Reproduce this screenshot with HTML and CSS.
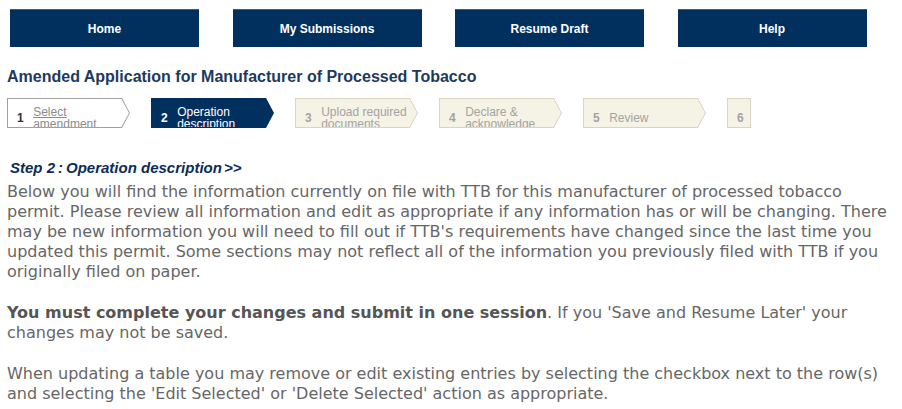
FILE: index.html
```html
<!DOCTYPE html>
<html lang="en">
<head>
<meta charset="utf-8">
<title>Amended Application for Manufacturer of Processed Tobacco</title>
<link rel="stylesheet" href="styles.css">
</head>
<body>
<nav class="topnav">
  <a class="navbtn" href="#">Home</a>
  <a class="navbtn" href="#">My Submissions</a>
  <a class="navbtn" href="#">Resume Draft</a>
  <a class="navbtn" href="#">Help</a>
</nav>

<h1 class="page-title">Amended Application for Manufacturer of Processed Tobacco</h1>

<ol class="steps">
  <li class="step done"><div class="step-in"><span class="num">1</span><a class="label link" href="#">Select<br>amendment</a></div></li>
  <li class="step current"><div class="step-in"><span class="num">2</span><span class="label">Operation<br>description</span></div></li>
  <li class="step todo"><div class="step-in"><span class="num">3</span><span class="label">Upload required<br>documents</span></div></li>
  <li class="step todo"><div class="step-in"><span class="num">4</span><span class="label">Declare &amp;<br>acknowledge</span></div></li>
  <li class="step todo"><div class="step-in"><span class="num">5</span><span class="label">Review</span></div></li>
  <li class="step todo last"><div class="step-in"><span class="num">6</span></div></li>
</ol>

<h2 class="step-heading">Step 2<span class="sep">:</span>Operation description<span class="gt">&gt;&gt;</span></h2>

<div class="content">
<p class="info">Below you will find the information currently on file with TTB for this manufacturer of processed tobacco permit. Please review all information and edit as appropriate if any information has or will be changing. There may be new information you will need to fill out if TTB's requirements have changed since the last time you updated this permit. Some sections may not reflect all of the information you previously filed with TTB if you originally filed on paper.</p>

<p class="info"><strong>You must complete your changes and submit in one session</strong>. If you 'Save and Resume Later' your changes may not be saved.</p>

<p class="info">When updating a table you may remove or edit existing entries by selecting the checkbox next to the row(s) and selecting the 'Edit Selected' or 'Delete Selected' action as appropriate.</p>
</div>
</body>
</html>
```

FILE: styles.css
```css
html, body {
  margin: 0;
  background: #ffffff;
}

body {
  padding: 9px 7px 0 7px;
  font-family: "Liberation Sans", Arial, sans-serif;
}

.topnav {
  display: flex;
  gap: 33.5px;
  margin-left: 3px;
}

.navbtn {
  width: 189px;
  height: 38px;
  box-sizing: border-box;
  background: #01305f;
  border-top: 1px solid #3b5d85;
  color: #ffffff;
  font-weight: bold;
  font-size: 12px;
  text-decoration: none;
  display: flex;
  align-items: center;
  justify-content: center;
}

.page-title {
  margin: 21px 0 0 0;
  font-size: 16px;
  line-height: 18px;
  font-weight: bold;
  color: #1c3a5e;
}

.steps {
  list-style: none;
  margin: 12px 0 0 0;
  padding: 0;
  display: flex;
  gap: 21px;
}

.step {
  width: 123px;
  height: 30px;
  box-sizing: border-box;
  padding: 1px;
  clip-path: polygon(0 0, calc(100% - 8px) 0, 100% 50%, calc(100% - 8px) 100%, 0 100%);
}

.step-in {
  height: 100%;
  box-sizing: border-box;
  padding: 10px 0 0 9px;
  display: flex;
  align-items: center;
  gap: 9.5px;
  overflow: hidden;
  clip-path: polygon(0 0, calc(100% - 7.6px) 0, 100% 50%, calc(100% - 7.6px) 100%, 0 100%);
}

.num {
  font-size: 12px;
  font-weight: bold;
  line-height: 12px;
  flex: none;
}

.label {
  font-size: 12px;
  line-height: 12px;
  white-space: nowrap;
}

.step.done { background: #a0a0a0; }
.step.done .step-in { background: #ffffff; }
.step.done .num { color: #333333; }
.step.done .link { color: #8c8c8c; text-decoration: underline; }

.step.current { background: #01305f; }
.step.current .step-in { background: #01305f; color: #ffffff; }

.step.todo { background: #d9d5c3; }
.step.todo .step-in { background: #f5f3e5; color: #a3a3a3; }

.step.last {
  width: 24px;
  clip-path: none;
}
.step.last .step-in { clip-path: none; }

.step-heading {
  margin: 31px 0 0 3px;
  font-size: 15px;
  line-height: 17px;
  font-weight: bold;
  font-style: italic;
  color: #0b2c59;
}

.step-heading .sep {
  margin: 0 3px 0 3px;
}

.step-heading .gt {
  margin-left: 2px;
}

.content {
  padding-top: 6px;
}

.info {
  margin: 0 0 21px 0;
  font-family: "DejaVu Sans", Verdana, sans-serif;
  font-size: 16px;
  line-height: 20px;
  color: #666666;
}

.info:last-child {
  margin-bottom: 0;
}

.info strong {
  color: #555555;
}
```
